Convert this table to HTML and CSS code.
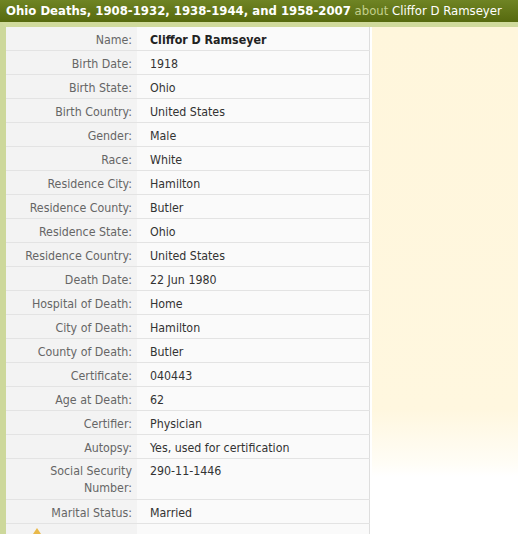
FILE: index.html
```html
<!DOCTYPE html>
<html>
<head>
<meta charset="utf-8">
<link rel="stylesheet" href="styles.css">
</head>
<body>
<div class="header"><span class="title">Ohio Deaths, 1908-1932, 1938-1944, and 1958-2007</span> <span class="about">about</span> <span class="person">Cliffor D Ramseyer</span></div>
<div class="main">
  <table class="rec">
    <tr><th>Name:</th><td><b>Cliffor D Ramseyer</b></td></tr>
    <tr><th>Birth Date:</th><td>1918</td></tr>
    <tr><th>Birth State:</th><td>Ohio</td></tr>
    <tr><th>Birth Country:</th><td>United States</td></tr>
    <tr><th>Gender:</th><td>Male</td></tr>
    <tr><th>Race:</th><td>White</td></tr>
    <tr><th>Residence City:</th><td>Hamilton</td></tr>
    <tr><th>Residence County:</th><td>Butler</td></tr>
    <tr><th>Residence State:</th><td>Ohio</td></tr>
    <tr><th>Residence Country:</th><td>United States</td></tr>
    <tr><th>Death Date:</th><td>22 Jun 1980</td></tr>
    <tr><th>Hospital of Death:</th><td>Home</td></tr>
    <tr><th>City of Death:</th><td>Hamilton</td></tr>
    <tr><th>County of Death:</th><td>Butler</td></tr>
    <tr><th>Certificate:</th><td>040443</td></tr>
    <tr><th>Age at Death:</th><td>62</td></tr>
    <tr><th>Certifier:</th><td>Physician</td></tr>
    <tr><th>Autopsy:</th><td>Yes, used for certification</td></tr>
    <tr class="tall"><th>Social Security<br>Number:</th><td>290-11-1446</td></tr>
    <tr><th>Marital Status:</th><td>Married</td></tr>
    <tr class="last"><th><span class="icon"></span></th><td></td></tr>
  </table>
  <div class="side"></div>
</div>
</body>
</html>
```
FILE: styles.css
```css
html, body { margin: 0; padding: 0; background: #fff; }
body { font-family: "DejaVu Sans Condensed", "DejaVu Sans", sans-serif; font-size: 12.3px; }
.header {
  height: 22px;
  line-height: 22px;
  padding-left: 6px;
  background: linear-gradient(#6f8424, #56690e);
  color: #fff;
  font-size: 13px;
  white-space: nowrap;
  overflow: hidden;
}
.title { font-weight: bold; }
.about { color: #c3cf8c; }
.main {
  display: flex;
  align-items: flex-start;
  border-top: 5px solid #d0da9c;
  border-left: 6px solid #cdd89b;
  min-height: 507px;
}
.rec {
  border-collapse: collapse;
  width: 364px;
  flex: none;
  border-right: 1px solid #dedede;
}
.rec th, .rec td {
  height: 20px;
  padding: 3px 0 0 0;
  border-bottom: 1px solid #e3e3e3;
  vertical-align: middle;
  line-height: 17px;
}
.rec th {
  width: 126px;
  text-align: right;
  font-weight: normal;
  color: #666;
  background: #f3f3f3;
  padding-right: 5px;
}
.rec td {
  background: #fafafa;
  color: #333;
  padding-left: 13px;
}
.rec td b { color: #222; }
.rec tr.tall th, .rec tr.tall td { vertical-align: top; padding-top: 4px; height: 36px; }
.rec tr.last th { text-align: left; vertical-align: top; padding-top: 4px; }
.side {
  flex: 1;
  margin-left: 2px;
  height: 450px;
  background: linear-gradient(#fff6dc, #fff7df 85%, #fffdf6 97%, #fff);
}
.icon {
  display: block;
  width: 0; height: 0;
  margin-left: 27px;
  border-left: 4px solid transparent;
  border-right: 4px solid transparent;
  border-bottom: 6px solid #e9b94a;
}
```
